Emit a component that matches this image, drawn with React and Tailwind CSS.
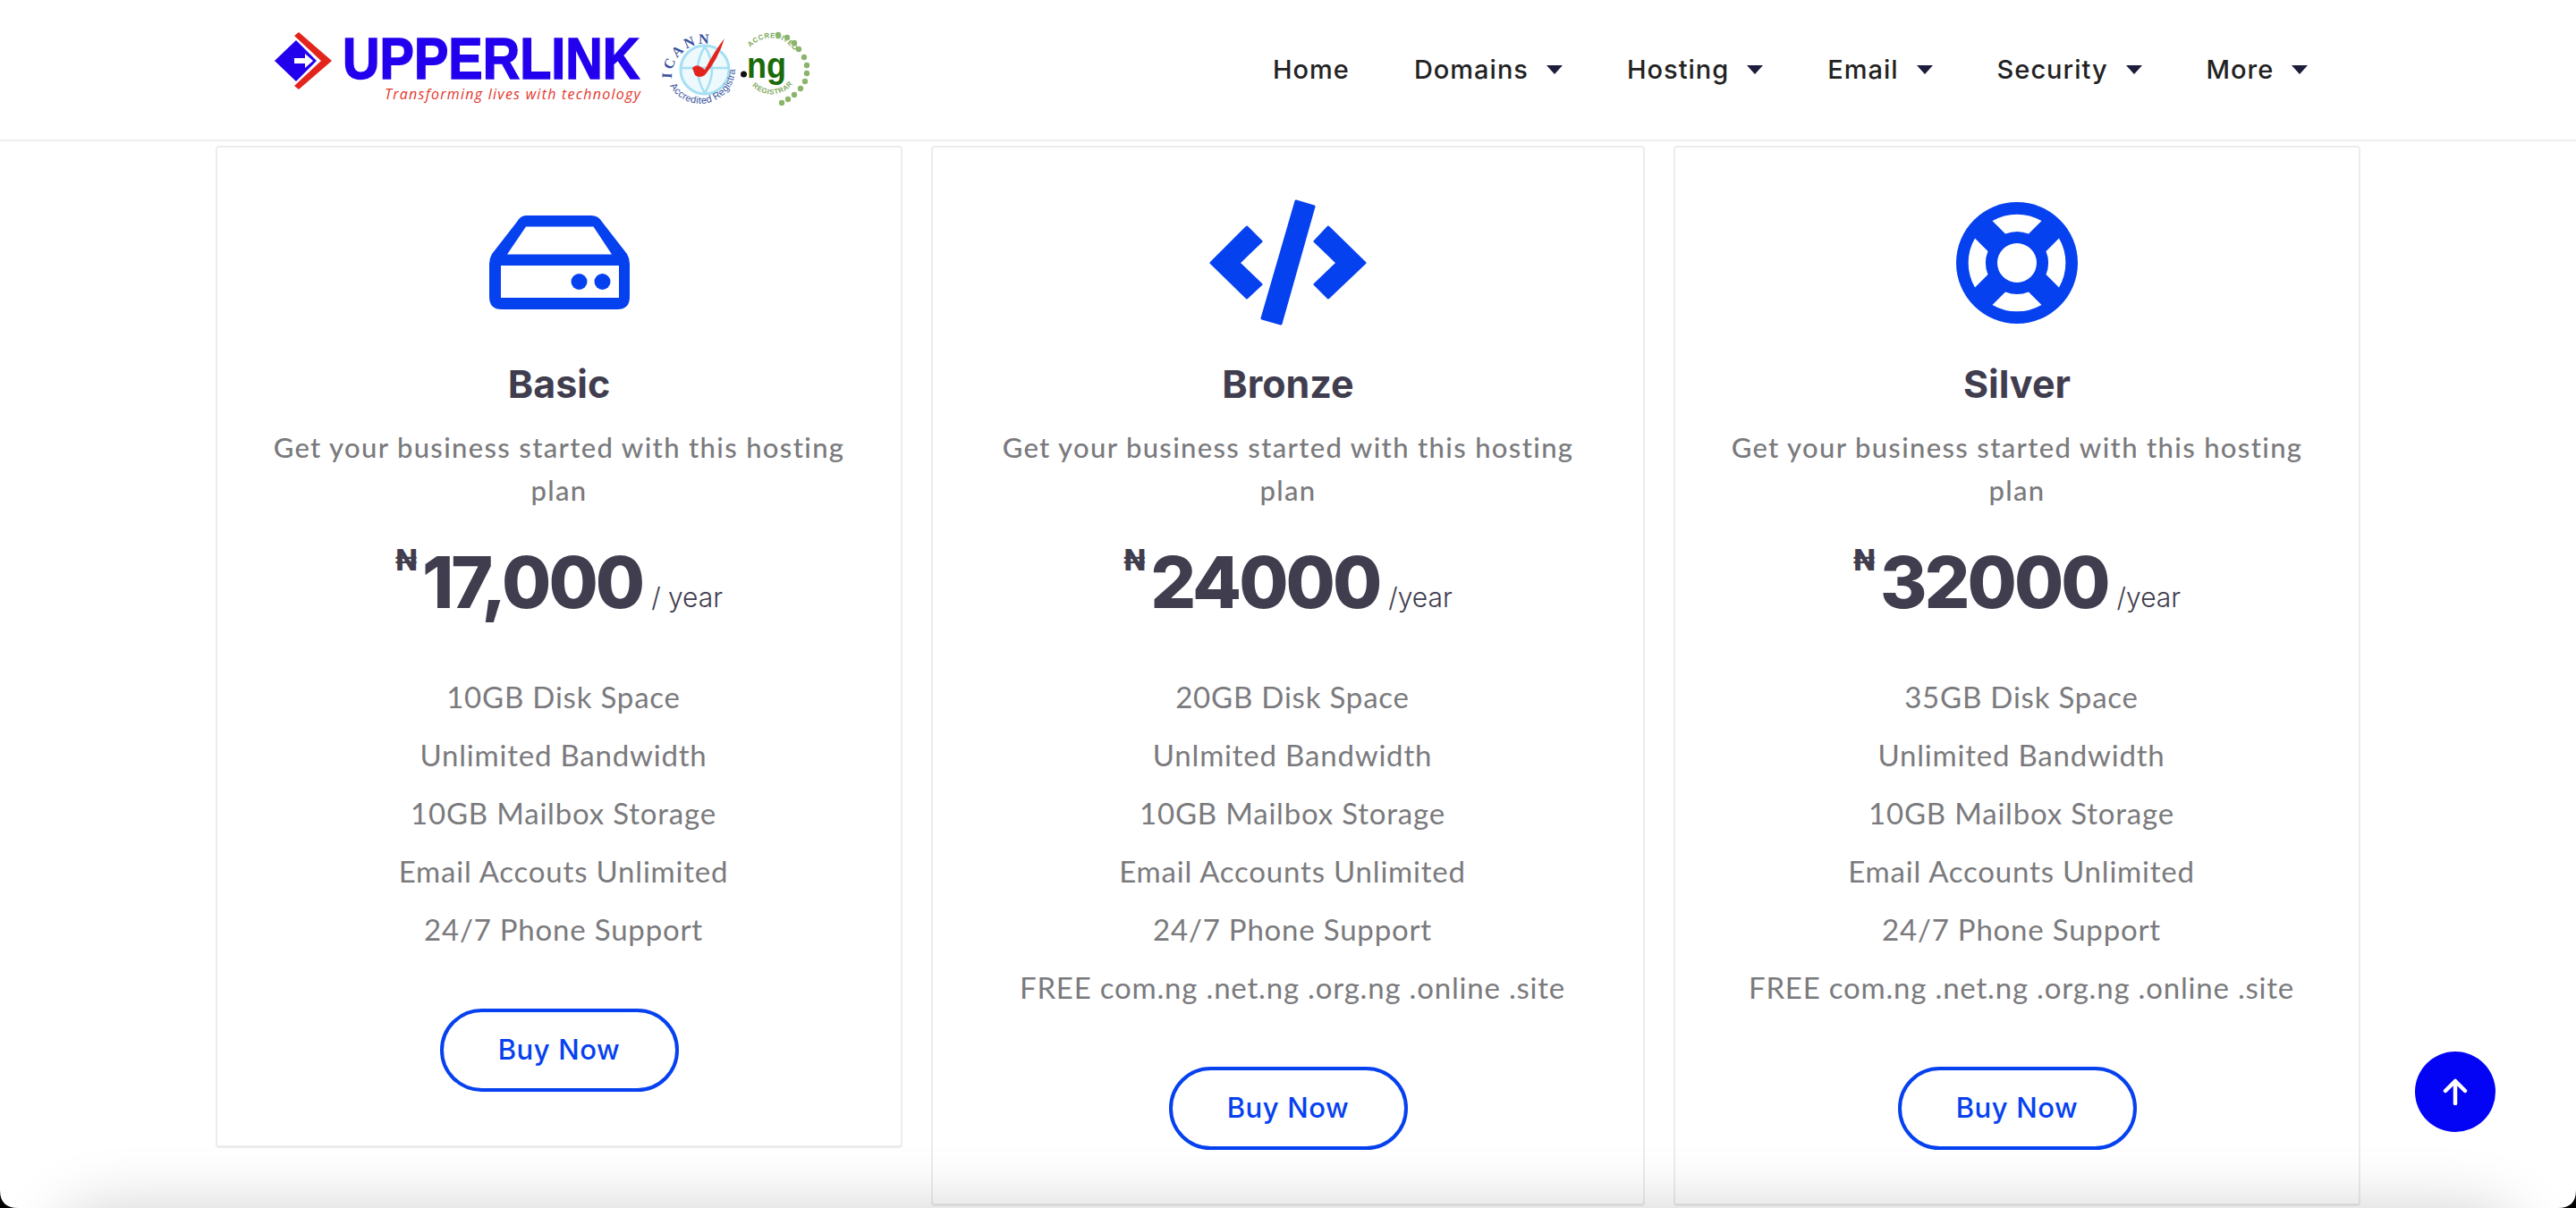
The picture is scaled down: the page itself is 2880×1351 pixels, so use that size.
import React from "react";

const plans = [
  {
    name: "Basic",
    icon: "server",
    price: "17,000",
    unit: "/ year",
    features: ["10GB Disk Space", "Unlimited Bandwidth", "10GB Mailbox Storage", "Email Accouts Unlimited", "24/7 Phone Support"],
  },
  {
    name: "Bronze",
    icon: "code",
    price: "24000",
    unit: "/year",
    features: ["20GB Disk Space", "Unlmited Bandwidth", "10GB Mailbox Storage", "Email Accounts Unlimited", "24/7 Phone Support", "FREE com.ng .net.ng .org.ng .online .site"],
  },
  {
    name: "Silver",
    icon: "buoy",
    price: "32000",
    unit: "/year",
    features: ["35GB Disk Space", "Unlimited Bandwidth", "10GB Mailbox Storage", "Email Accounts Unlimited", "24/7 Phone Support", "FREE com.ng .net.ng .org.ng .online .site"],
  },
];

const navItems = [
  { label: "Home" },
  { label: "Domains", caret: true },
  { label: "Hosting", caret: true },
  { label: "Email", caret: true },
  { label: "Security", caret: true },
  { label: "More", caret: true },
];

const ServerIcon = () => (
  <svg width="157" height="105" viewBox="0 0 157 105">
    <path
      fillRule="evenodd"
      fill="#0641f0"
      d="M41 0H114Q122 0 126 7L154 43Q157 48 157 54V91Q157 105 143 105H14Q0 105 0 91V54Q0 48 3 43L31 7Q35 0 41 0ZM41 12.5L20 43.5H137L116.5 12.5ZM13 56V92H145V56Z"
    />
    <circle cx="100.5" cy="74" r="9" fill="#0641f0" />
    <circle cx="126.5" cy="74" r="9" fill="#0641f0" />
  </svg>
);

const CodeIcon = () => (
  <svg width="176" height="141" viewBox="0 0 176 141">
    <g fill="#0641f0" stroke="#0641f0" strokeWidth="3" strokeLinejoin="round">
      <path d="M2 71L42 31L58 47L33 71L58 95L42 110Z" />
      <path d="M174 71L133 31L118 47L143 71L118 95L133 110Z" />
      <path d="M97 2L117 8L80 139L59 133Z" />
    </g>
  </svg>
);

const BuoyIcon = () => (
  <svg width="136" height="136" viewBox="0 0 136 136">
    <circle cx="68" cy="68" r="68" fill="#0641f0" />
    <circle cx="68" cy="68" r="22" fill="#fff" />
    {[0, 90, 180, 270].map((deg) => (
      <path
        key={deg}
        fill="#fff"
        transform={`rotate(${deg} 68 68)`}
        d="M40.5 21A55 55 0 0 1 95.5 21L81 35.5A35 35 0 0 0 55 35.5Z"
      />
    ))}
  </svg>
);

const planIcons = { server: ServerIcon, code: CodeIcon, buoy: BuoyIcon };

const Logo = () => (
  <div className="flex items-start">
    <svg width="64" height="64" viewBox="0 0 64 64" className="mt-[36px] shrink-0">
      <path d="M0 32L24 9L47 32L24 55Z" fill="#2200ee" />
      <path d="M22 4L27 0L64 32L27 64L22 60L52 32Z" fill="#e3241c" />
      <path d="M22 29H38V35H22Z" fill="#fff" />
      <path d="M34 24L43 32L34 40Z" fill="#fff" />
    </svg>
    <div className="ml-[12px] w-[338px] pt-[37px]">
      <div className="h-[58px] origin-left scale-x-[0.885] whitespace-nowrap font-['Liberation_Sans'] text-[65px] leading-[58px] font-bold text-[#2200ee] [-webkit-text-stroke:1.5px_#2200ee]">
        UPPERLINK
      </div>
      <div className="ml-[47px] whitespace-nowrap font-['Open_Sans'] text-[16px] leading-[20px] tracking-[1.25px] text-[#e3352b] italic">
        Transforming lives with technology
      </div>
    </div>
    <svg width="90" height="84" viewBox="0 0 90 84" className="mt-[36px] ml-[17px] shrink-0 overflow-visible">
      <defs>
        <path id="icannTop" d="M13 52A37 37 0 0 1 62 15" fill="none" />
        <path id="icannBottom" d="M11 60A39 39 0 0 0 84 40" fill="none" />
      </defs>
      <circle cx="50" cy="42" r="27" fill="#eef9fd" stroke="#a6e0f3" strokeWidth="3" />
      <path d="M24 40H76M50 16Q34 42 50 68M50 16Q66 42 50 68" fill="none" stroke="#a6e0f3" strokeWidth="2.5" />
      <text fontFamily="Liberation Serif, serif" fontSize="16" fontWeight="700" letterSpacing="3" fill="#35519b">
        <textPath href="#icannTop">ICANN</textPath>
      </text>
      <text fontFamily="Liberation Sans, sans-serif" fontSize="11" letterSpacing="0.3" fill="#35519b">
        <textPath href="#icannBottom">Accredited Registrar</textPath>
      </text>
      <path d="M36 40Q40 35 46 39L50 42Q60 22 72 7Q65 30 50 48Q44 52 39 48Z" fill="#e3241c" />
    </svg>
    <svg width="78" height="84" viewBox="0 0 78 84" className="mt-[36px] shrink-0 overflow-visible">
      <defs>
        <path id="ngTop" d="M11 17A30 30 0 0 1 64 37" fill="none" />
        <path id="ngBottom" d="M13 60A30 30 0 0 0 62 52" fill="none" />
      </defs>
      <text fontFamily="Liberation Sans, sans-serif" fontSize="8" fontWeight="700" letterSpacing="0.5" fill="#7da85c">
        <textPath href="#ngTop">ACCREDITED</textPath>
      </text>
      <text fontFamily="Liberation Sans, sans-serif" fontSize="8" fontWeight="700" letterSpacing="0.5" fill="#7da85c">
        <textPath href="#ngBottom">REGISTRAR</textPath>
      </text>
      <circle cx="3.5" cy="47" r="3.5" fill="#111" />
      <text x="7" y="51" fontFamily="Liberation Sans, sans-serif" fontSize="40" fontWeight="700" fill="#1a6b0a" textLength="44" lengthAdjust="spacingAndGlyphs">
        ng
      </text>
      {[[42, 3], [52, 6], [60, 12], [65, 19], [71, 28], [74, 37], [74, 46], [72, 55], [67, 63], [60, 70], [53, 75], [46, 79]].map(([cx, cy]) => (
        <circle key={`${cx}-${cy}`} cx={cx} cy={cy} r="3.2" fill="#8cb56b" />
      ))}
    </svg>
  </div>
);

const Header = () => (
  <header className="flex h-[158px] items-start border-b-2 border-[#eeeeee] bg-white pl-[307px]">
    <Logo />
    <nav className="ml-[517px] flex items-center gap-[72px] pt-[58px] font-['Inter'] text-[29px] leading-[40px] font-medium tracking-[1px] text-[#222222]">
      {navItems.map((item) => (
        <div key={item.label} className="flex items-center gap-[20px] whitespace-nowrap">
          <span>{item.label}</span>
          {item.caret && (
            <span className="h-0 w-0 border-x-[9px] border-t-[10px] border-x-transparent border-t-[#1c1c3c]" />
          )}
        </div>
      ))}
    </nav>
  </header>
);

const PlanCard = ({ plan, className }) => {
  const Icon = planIcons[plan.icon];
  return (
    <div className={`flex flex-col items-center rounded-[4px] border-2 border-b-[3px] border-[#ececec] bg-white pt-[58px] pb-[60px] ${className}`}>
      <div className="flex h-[141px] items-center justify-center">
        <Icon />
      </div>
      <h3 className="mt-[36px] font-['Inter'] text-[43px] leading-[58px] font-bold text-[#3f3d4e]">{plan.name}</h3>
      <p className="mt-[18px] w-[660px] text-center font-['Lato'] text-[31px] leading-[48px] font-medium tracking-[1.35px] text-[#7a7a7d]">
        Get your business started with this hosting plan
      </p>
      <div className="mt-[29px] flex h-[100px] items-center text-[#3f3d4e]">
        <span className="mb-[48px] font-['Inter'] text-[32px] leading-none font-extrabold">₦</span>
        <span className="ml-[6px] font-['Inter'] text-[80px] leading-[100px] font-extrabold tracking-[-3px]">{plan.price}</span>
        <span className="mt-[34px] ml-[10px] font-['Inter'] text-[30px] leading-[40px] font-light">{plan.unit}</span>
      </div>
      <ul className="mt-[46px] ml-[10px] text-center font-['Lato'] text-[33px] leading-[65px] tracking-[0.8px] text-[#7a7a7d]">
        {plan.features.map((feature) => (
          <li key={feature}>{feature}</li>
        ))}
      </ul>
      <button className="mt-[56px] h-[93px] w-[267px] rounded-full border-4 border-[#0641f0] bg-white font-['Inter'] text-[31px] font-medium tracking-[0.6px] text-[#0641f0]">
        Buy Now
      </button>
    </div>
  );
};

export default function App() {
  return (
    <div className="relative h-[1351px] overflow-hidden bg-white">
      <Header />
      <main className="mt-[5px] flex items-start gap-[32px] pl-[241px]">
        <PlanCard plan={plans[0]} className="w-[768px]" />
        <PlanCard plan={plans[1]} className="w-[798px]" />
        <PlanCard plan={plans[2]} className="w-[768px]" />
      </main>
      {/* shadow of the footer that sits just under the fold */}
      <div className="absolute top-[1351px] right-[60px] left-[60px] h-[200px] rounded-t-[60px] bg-white shadow-[0_0_70px_rgba(0,0,0,0.18)]" />
      <button className="absolute top-[1176px] left-[2700px] flex h-[90px] w-[90px] items-center justify-center rounded-full bg-[#0303f5]">
        <svg width="30" height="30" viewBox="0 0 30 30" fill="none" stroke="#fff" strokeWidth="4.5" strokeLinecap="round" strokeLinejoin="round">
          <path d="M15 28V3M4 14L15 3L26 14" />
        </svg>
      </button>
      {/* window corners at the bottom of the capture */}
      <svg width="20" height="20" viewBox="0 0 20 20" className="absolute bottom-0 left-0">
        <path d="M0 0Q0 20 20 20H0Z" fill="#000" />
      </svg>
      <svg width="20" height="20" viewBox="0 0 20 20" className="absolute right-0 bottom-0">
        <path d="M20 0Q20 20 0 20H20Z" fill="#000" />
      </svg>
    </div>
  );
}
